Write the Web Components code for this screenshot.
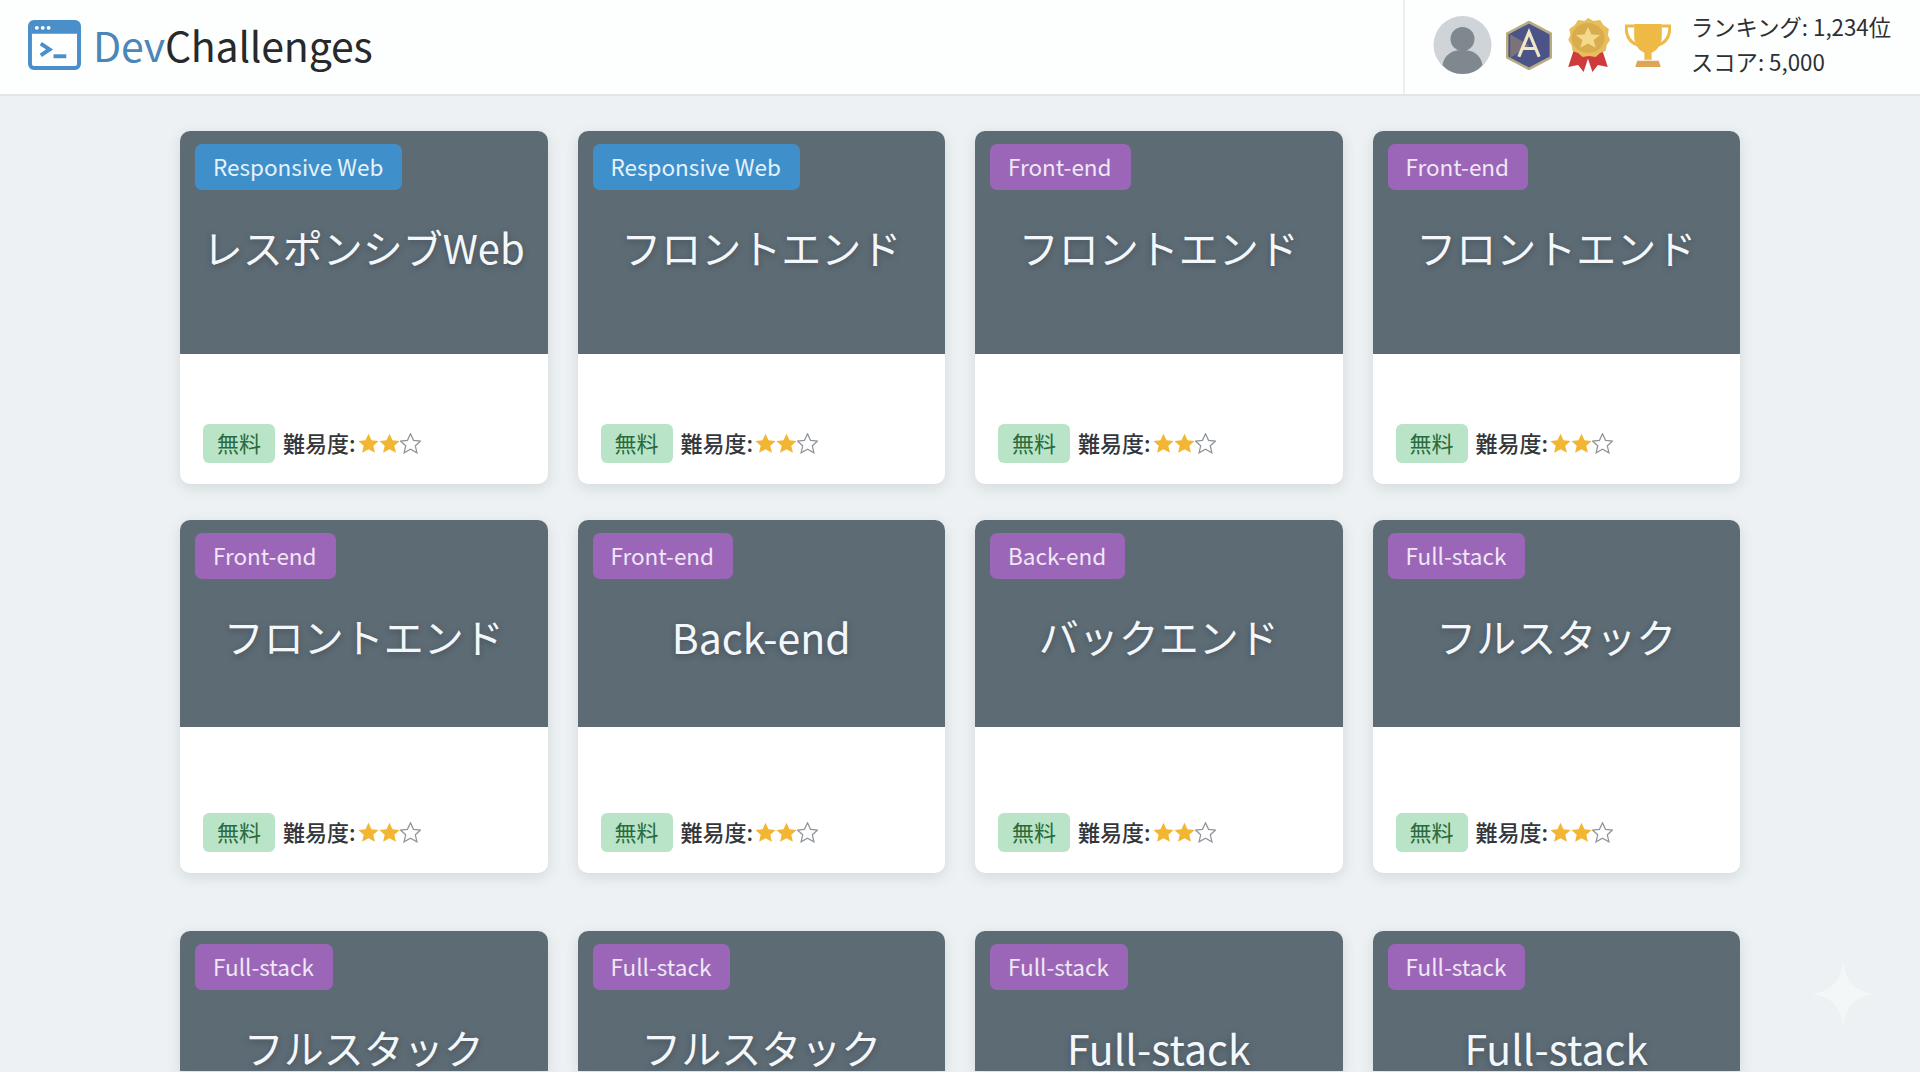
<!DOCTYPE html>
<html lang="ja"><head><meta charset="utf-8"><title>DevChallenges</title>
<style>
html,body{margin:0;height:1072px;overflow:hidden;background:#edf1f3;font-family:"Noto Sans CJK JP","Noto Sans",sans-serif;color:#2b2f33}
</style></head><body>
<dc-header></dc-header>
<dc-board>
  <dc-row head="223">
    <dc-card tag="Responsive Web" tone="blue">レスポンシブWeb</dc-card>
    <dc-card tag="Responsive Web" tone="blue">フロントエンド</dc-card>
    <dc-card tag="Front-end">フロントエンド</dc-card>
    <dc-card tag="Front-end">フロントエンド</dc-card>
  </dc-row>
  <dc-row head="207" style="margin-top:36px">
    <dc-card tag="Front-end">フロントエンド</dc-card>
    <dc-card tag="Front-end" latin>Back-end</dc-card>
    <dc-card tag="Back-end">バックエンド</dc-card>
    <dc-card tag="Full-stack">フルスタック</dc-card>
  </dc-row>
  <dc-row head="140" style="margin-top:58px">
    <dc-card fold tag="Full-stack">フルスタック</dc-card>
    <dc-card fold tag="Full-stack">フルスタック</dc-card>
    <dc-card fold tag="Full-stack" latin>Full-stack</dc-card>
    <dc-card fold tag="Full-stack" latin>Full-stack</dc-card>
  </dc-row>
</dc-board>
<dc-sparkle></dc-sparkle>
<script>
function el(name, html, init){
  customElements.define(name, class extends HTMLElement{
    constructor(){super();this.attachShadow({mode:'open'}).innerHTML=html;}
    connectedCallback(){ if(init) init(this); }
  });
}
el('dc-header',`<style>
:host{display:flex;height:94px;background:#fdfefe;border-bottom:2px solid #e3e6e8;align-items:stretch;justify-content:space-between}
.left{display:flex;align-items:center;padding:0 0 4px 28px;gap:12px}
.name{font-size:41px;line-height:1;letter-spacing:-.2px;color:#27292c;padding-bottom:2px}
.name b{font-weight:400;color:#4b86b8}
.right{width:517px;border-left:2px solid #eceeef;box-sizing:border-box;display:flex;align-items:center;padding:0 0 4px 28px}
.a{margin-right:14px}.b{margin-right:14px}.c{margin-right:15px}.d{margin-right:20px}
.rank{font-size:22.300px;line-height:35px;color:#2d3033;white-space:nowrap;margin-bottom:2px}
svg{display:block;flex:none}
</style>
<div class="left">
<svg width="53" height="50" viewBox="0 0 54 51"><rect x="2" y="2" width="50" height="47" rx="4" fill="#fff" stroke="#4a8fc9" stroke-width="4"/><path d="M4 4h46v10H4z" fill="#4a8fc9"/><circle cx="9" cy="8" r="2" fill="#fff"/><circle cx="15" cy="8" r="2" fill="#fff"/><circle cx="21" cy="8" r="2" fill="#fff"/><path d="M13 24l9 6-9 6" fill="none" stroke="#4a8fc9" stroke-width="4"/><path d="M26 37h13" stroke="#4a8fc9" stroke-width="4"/></svg>
<div class="name"><b>Dev</b>Challenges</div></div>
<div class="right">
<svg class="a" width="59" height="60" viewBox="0 0 58 60"><circle cx="29" cy="30" r="29" fill="#cfd4d9"/><circle cx="29" cy="24" r="12" fill="#7f888e"/><path d="M9 50c2-11 10-15 20-15s18 4 20 15c-5 6-12 9-20 9s-15-3-20-9z" fill="#7f888e"/></svg>
<svg class="b" width="46" height="49" viewBox="0 0 43 48" preserveAspectRatio="none"><path d="M21.500 1L42 12.500v23L21.500 47 1 35.500v-23z" fill="#4b5488" stroke="#b8ac80" stroke-width="2.500"/><path d="M4 13l18 11-18 12z" fill="#8b7e74" opacity=".75"/><path d="M12 35l9.500-24L31 35M15.500 27h12" fill="none" stroke="#efe8c4" stroke-width="3"/></svg>
<svg class="c" width="44" height="56" viewBox="0 0 40 56" preserveAspectRatio="none"><path d="M8 30L2 50l9-2 5 7 6-20z" fill="#cf3a3c"/><path d="M32 30l6 20-9-2-5 7-6-20z" fill="#cf3a3c"/><path d="M20 1l5 3 6-1 3 5 5 4-1 6 2 5-3 5-1 6-5 2-4 4-6-1-6 1-4-4-5-2-1-6-3-5 2-5-1-6 5-4 3-5 6 1z" fill="#e8be5c"/><circle cx="20" cy="21" r="15" fill="#d9ad4d"/><path d="M20 10l3.200 7.400 7.800.6-5.900 5.100 1.900 7.700-7-4.200-7 4.200 1.900-7.700L9 18l7.800-.6z" fill="#f3d98a"/></svg>
<svg class="d" width="46" height="45" viewBox="0 0 45 44"><path d="M9 3H1c0 11 4 17 13 19M36 3h8c0 11-4 17-13 19" fill="none" stroke="#eeb945" stroke-width="3"/><path d="M9 1h27v12c0 9-5 14-10 16v7h-7v-7C14 27 9 22 9 13z" fill="#eeb945"/><path d="M12 37h21l2 6H10z" fill="#e0a552"/></svg>
<div class="rank">ランキング: 1,234位<br>スコア: 5,000</div>
</div>`);
el('dc-board',`<style>:host{display:block;padding:35px 180px 0}</style><slot></slot>`);
el('dc-row',`<style>:host{display:grid;grid-template-columns:repeat(4,367.5px);column-gap:30px;--head:207px}</style><slot></slot>`,
  h=>h.style.setProperty('--head',h.getAttribute('head')+'px'));
const star='M10 .8l2.900 6.200 6.700.7-5 4.500 1.500 6.700L10 15.500l-6.100 3.400 1.500-6.700-5-4.500 6.700-.7z';
el('dc-card',`<style>
:host{display:flex;flex-direction:column;height:353px;border-radius:10px;background:#fff;box-shadow:0 4px 14px rgba(60,75,85,.14);overflow:hidden}
:host([fold]){height:var(--head);border-radius:10px 10px 0 0}
:host([fold]) .body{display:none}
.head{height:var(--head);flex:none;background:#5d6b75;box-sizing:border-box;padding:13px 14px 0;display:flex;flex-direction:column;align-items:flex-start}
.tag{height:46px;box-sizing:border-box;border-radius:7px;padding:0 19px 2px 18px;margin-left:1px;display:flex;align-items:center;font-size:22.500px;color:#f0e6f6;background:#9b66b8}
:host([tone=blue]) .tag{background:#3f8fcb;color:#e4f2fb}
.title{align-self:stretch;text-align:center;font-size:40px;line-height:46px;margin-top:34px;color:#f4f7f9;text-shadow:0 2px 6px rgba(40,50,58,.45);white-space:nowrap}
:host([latin]) .title{font-size:41px}
.body{flex:1;display:flex;align-items:flex-end;padding:0 0 21px 23px;gap:8px}
.free{width:72px;height:39px;box-sizing:border-box;padding-bottom:3px;border-radius:6px;background:#b9e4c7;color:#2a6a3c;font-size:22px;display:flex;align-items:center;justify-content:center}
.lvl{height:39px;box-sizing:border-box;padding-bottom:3px;display:flex;align-items:center;font-size:22px;font-weight:500;color:#33373b;gap:2px}
.stars{display:flex;padding-top:3px}
svg{display:block}
</style>
<div class="head"><div class="tag"></div><div class="title"><slot></slot></div></div>
<div class="body"><div class="free">無料</div><div class="lvl"><span>難易度:</span><span class="stars">
<svg width="21" height="21" viewBox="0 0 20 20"><path d="${star}" fill="#f2b632"/></svg>
<svg width="21" height="21" viewBox="0 0 20 20"><path d="${star}" fill="#f2b632"/></svg>
<svg width="21" height="21" viewBox="0 0 20 20"><path d="${star}" fill="#fff" stroke="#8f9498" stroke-width="1.200"/></svg>
</span></div></div>`,h=>{h.shadowRoot.querySelector('.tag').textContent=h.getAttribute('tag');});
el('dc-sparkle',`<style>:host{position:absolute;left:1811px;top:961px;display:block}svg{display:block}</style>
<svg width="64" height="66" viewBox="0 0 64 66"><path d="M32 0C34 20 44 31 64 33 44 35 34 46 32 66 30 46 20 35 0 33 20 31 30 20 32 0z" fill="#f4f7f8"/></svg>`);
</script>
</body></html>
